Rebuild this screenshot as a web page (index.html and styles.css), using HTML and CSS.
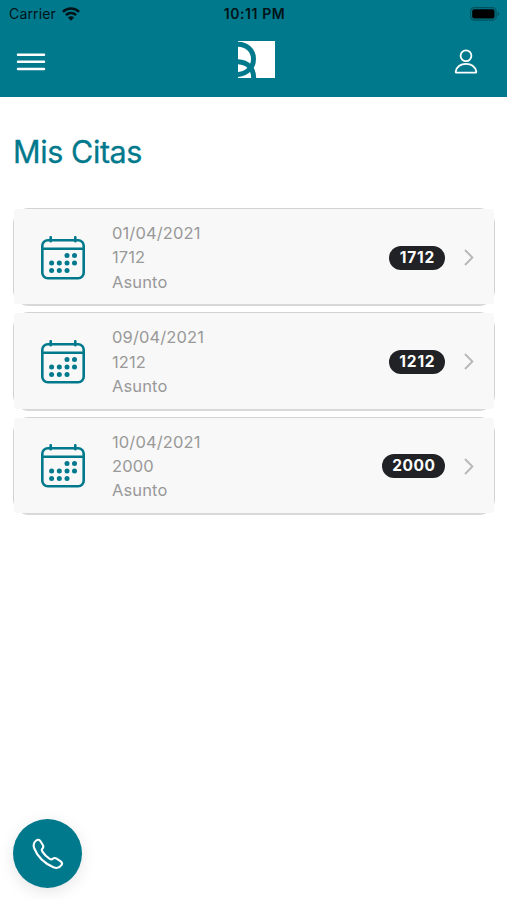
FILE: index.html
```html
<!DOCTYPE html>
<html lang="es">
<head>
<meta charset="utf-8">
<title>Mis Citas</title>
<link rel="stylesheet" href="styles.css">
</head>
<body>
<svg width="0" height="0" class="defs">
  <symbol id="calendar" viewBox="0 0 44 44">
    <g fill="none" stroke="currentColor" stroke-width="2.6">
      <rect x="1.3" y="4.3" width="41.4" height="38" rx="5.5"/>
      <path d="M1.3 12.7h41.4M9.700 1.200v4M34.300 1.200v4" stroke-linecap="round"/>
    </g>
    <g fill="currentColor">
      <circle cx="26" cy="19.500" r="2.500"/><circle cx="33.500" cy="19.500" r="2.500"/>
      <circle cx="10.600" cy="27" r="2.500"/><circle cx="18.300" cy="27" r="2.500"/><circle cx="26" cy="27" r="2.500"/><circle cx="33.500" cy="27" r="2.500"/>
      <circle cx="10.600" cy="34.600" r="2.500"/><circle cx="18.300" cy="34.600" r="2.500"/><circle cx="26" cy="34.600" r="2.500"/>
    </g>
  </symbol>
  <symbol id="chevron" viewBox="0 0 10 17"><path d="M1 1l7.400 7.500L1 16" fill="none" stroke="currentColor" stroke-width="1.900"/></symbol>
</svg>
<header class="header">
  <div class="status">
    <div class="carrier"><span>Carrier</span>
      <svg width="18" height="14" viewBox="0 0 18 14"><g fill="none" stroke="#001317" stroke-width="2.400"><path d="M.9 4.800a11.500 11.500 0 0 1 16.200 0"/><path d="M3.900 8.100a7.200 7.200 0 0 1 10.200 0"/></g><path d="M9 13.700L5.900 10.500a4.400 4.400 0 0 1 6.200 0z" fill="#001317"/></svg>
    </div>
    <span class="time">10:11 PM</span>
    <svg class="battery" width="30" height="14" viewBox="0 0 30 14"><rect x=".6" y=".6" width="25.500" height="12.600" rx="3.800" fill="none" stroke="#00515e" stroke-width="1.200"/><rect x="2.200" y="2.200" width="22.300" height="9.400" rx="2" fill="#000"/><path d="M27.700 5v4q1.600-.6 1.600-2t-1.600-2" fill="#00515e"/></svg>
  </div>
  <nav class="nav">
    <svg width="30" height="20" viewBox="0 0 30 20"><path d="M2 2.700h26M2 9.800h26M2 17.100h26" stroke="#fff" stroke-width="2.500" stroke-linecap="round"/></svg>
    <svg class="logo" width="37" height="37" viewBox="0 0 37 37"><path d="M0 0h37v37H0z" fill="#fff"/><g fill="none" stroke="#00798c" stroke-width="5"><path d="M-1 3.200C9 3 15.500 9.500 15.500 18Q15.500 24 12 27.500Q7.500 33 -1 33.500"/><path d="M-1 20.800C10 21 16 27.500 15.700 38"/></g></svg>
    <svg width="24" height="26" viewBox="0 0 24 26"><g fill="none" stroke="#fff" stroke-width="1.800"><circle cx="12" cy="6.700" r="5.400"/><path d="M2.700 23.700h18.600q1.200 0 1-1.300C20.800 17 16.600 14.900 12 14.900S3.200 17 1.700 22.400q-.2 1.300 1 1.300z"/></g></svg>
  </nav>
</header>
<main class="main">
  <h1 class="title">Mis Citas</h1>
  <ul class="list">
    <li class="card"><div class="row">
      <svg class="calendar"><use href="#calendar"/></svg>
      <div class="info"><span>01/04/2021</span><span>1712</span><span>Asunto</span></div>
      <span class="badge">1712</span><svg class="chevron"><use href="#chevron"/></svg>
    </div></li>
    <li class="card"><div class="row">
      <svg class="calendar"><use href="#calendar"/></svg>
      <div class="info"><span>09/04/2021</span><span>1212</span><span>Asunto</span></div>
      <span class="badge">1212</span><svg class="chevron"><use href="#chevron"/></svg>
    </div></li>
    <li class="card"><div class="row">
      <svg class="calendar"><use href="#calendar"/></svg>
      <div class="info"><span>10/04/2021</span><span>2000</span><span>Asunto</span></div>
      <span class="badge wide">2000</span><svg class="chevron"><use href="#chevron"/></svg>
    </div></li>
  </ul>
</main>
<button class="call" aria-label="Llamar">
  <svg width="32" height="32" viewBox="0 0 32 32"><path d="M4.200 2.500Q6.500.7 8.500 3.300L10.800 7Q12 9 10.300 10.800Q9.300 11.800 10.400 13.600Q13.200 18 17.700 20.900Q19.500 22 20.800 20.700Q22.400 19.300 24.600 20.700L28.700 23.300Q31 25 29.400 27.200Q26.500 31.300 21.500 29.300Q7.500 23.300 2.300 10.500Q.3 5.200 4.200 2.500z" fill="none" stroke="#fff" stroke-width="2.100" stroke-linejoin="round"/></svg>
</button>
</body>
</html>
```
FILE: styles.css
```css
* { box-sizing: border-box; }
body {
  margin: 0;
  height: 900px;
  overflow: hidden;
  background: #fff;
  font-family: Inter, "Liberation Sans", sans-serif;
}
.defs { position: absolute; }
.header { height: 97px; background: #00798c; }
.status {
  height: 27px;
  padding: 0 7px 0 9px;
  display: grid;
  grid-template-columns: 1fr auto 1fr;
  align-items: center;
  font-size: 14px;
  line-height: 27px;
  color: #001317;
}
.carrier { display: flex; align-items: center; gap: 6px; letter-spacing: .15px; }
.time { font-weight: 600; font-size: 14px; letter-spacing: .6px; }
.battery { justify-self: end; }
.nav {
  height: 70px;
  padding: 0 29px 0 16px;
  display: grid;
  grid-template-columns: 1fr 37px 1fr;
  align-items: center;
}
.nav svg:last-child { justify-self: end; }
.logo { margin: -6px 0 0 9px; }
.main { padding: 33px 12px 0 13px; }
.title {
  margin: 0 0 34px;
  height: 44px;
  font-size: 30.500px;
  line-height: 44px;
  font-weight: 400;
  letter-spacing: -.4px;
  -webkit-text-stroke: .3px #00798c;
  color: #00798c;
}
.list {
  list-style: none;
  margin: 0;
  padding: 0;
  display: flex;
  flex-direction: column;
  gap: 6px;
}
.card {
  height: 98.300px;
  border: 1px solid #d2d2d2;
  border-bottom: 2px solid #d8d8d8;
  border-radius: 16px;
}
.row {
  height: 100%;
  padding: 2px 20px 0 27px;
  display: flex;
  align-items: center;
  background: #f8f8f8;
  border-radius: 3px;
}
.calendar { width: 44px; height: 44px; color: #00798c; }
.info {
  flex: 1;
  margin-left: 27px;
  display: flex;
  flex-direction: column;
  font-size: 16.500px;
  line-height: 24.400px;
  letter-spacing: .12px;
  color: #999;
}
.badge {
  width: 56px;
  height: 24px;
  border-radius: 12px;
  background: #202226;
  color: #fff;
  font-size: 15.500px;
  font-weight: 700;
  line-height: 24px;
  letter-spacing: .8px;
  text-indent: .8px;
  text-align: center;
}
.badge.wide { width: 63px; letter-spacing: .5px; }
.chevron { width: 10px; height: 17px; margin-left: 19px; color: #b8b8b8; }
.call {
  position: absolute;
  left: 13px;
  top: 819px;
  width: 69px;
  height: 69px;
  padding: 0;
  border: 0;
  border-radius: 50%;
  background: #00798c;
  box-shadow: 0 4px 16px rgba(0, 0, 0, .1);
  display: grid;
  place-items: center;
}
```
